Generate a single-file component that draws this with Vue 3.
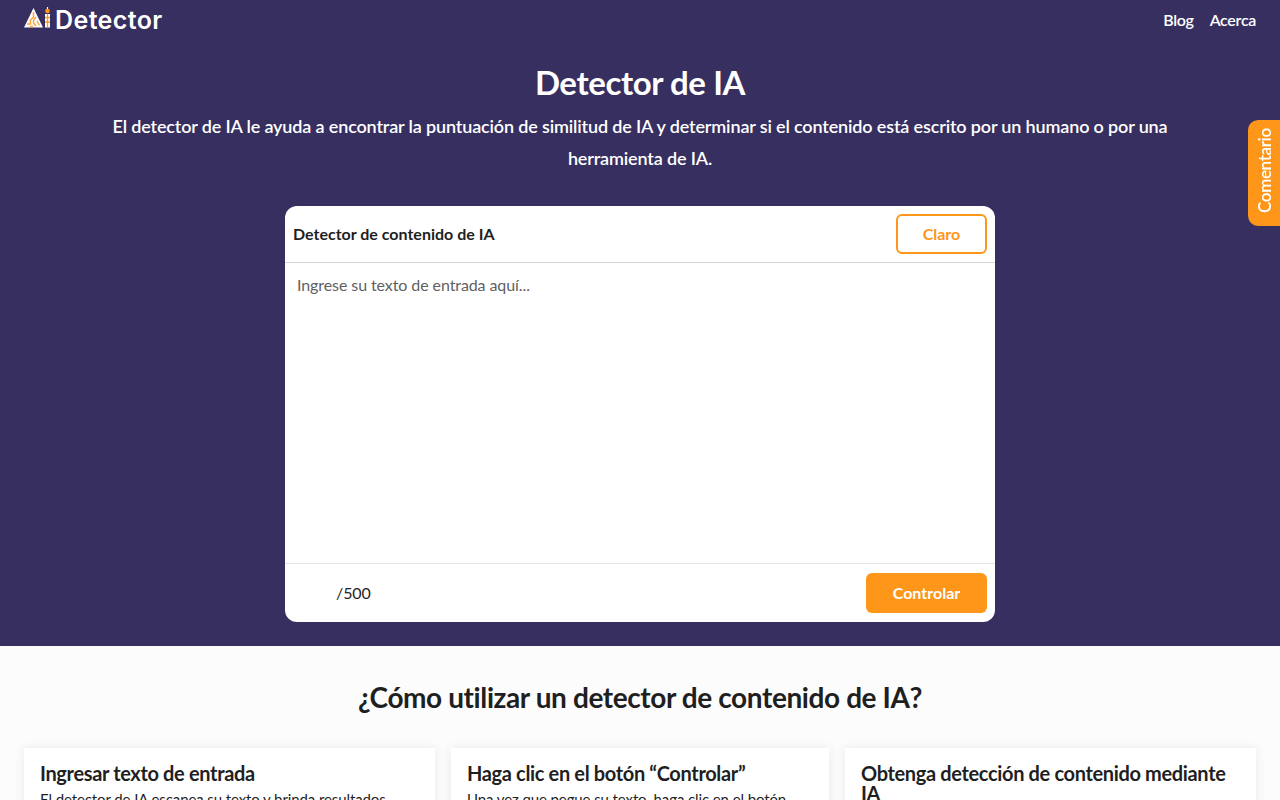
<template>
  <div class="page">
    <section class="hero">
      <header class="topbar">
        <a class="brand">
          <svg class="brand-icon" width="27" height="22" viewBox="0 0 27 22">
            <path d="M9.500 1 L19 20.500 L0 20.500 Z" fill="#fff" />
            <path d="M9.500 5 V10 L6.500 13 V17 H3 M12 10 L9.500 13 V16 L12 19 M13 14 L15.500 18.500 M6 19.500 H9" fill="none" stroke="#fda63f" stroke-width="1.500" />
            <rect x="21" y="7" width="5" height="13.500" fill="#fff" />
            <path d="M23.500 7 V20 M21 10.500 H26 M21 15 H26" fill="none" stroke="#fd9619" stroke-width="1.300" />
            <circle cx="23.500" cy="4" r="2.300" fill="#fd9619" />
            <path d="M23.500 0 V2" stroke="#fff" stroke-width="1.200" />
          </svg>
          <span class="brand-name">Detector</span>
        </a>
        <nav class="nav">
          <a>Blog</a>
          <a>Acerca</a>
        </nav>
      </header>

      <h1>Detector de IA</h1>
      <p class="lead">El detector de IA le ayuda a encontrar la puntuación de similitud de IA y determinar si el contenido está escrito por un humano o por una herramienta de IA.</p>

      <div class="tool">
        <div class="tool-head">
          <span class="tool-title">Detector de contenido de IA</span>
          <button class="btn-clear" @click="text = ''">Claro</button>
        </div>
        <textarea v-model="text" placeholder="Ingrese su texto de entrada aquí..."></textarea>
        <div class="tool-foot">
          <span class="count">{{ text.length || '' }}/500</span>
          <button class="btn-check">Controlar</button>
        </div>
      </div>
    </section>

    <section class="howto">
      <h2>¿Cómo utilizar un detector de contenido de IA?</h2>
      <div class="steps">
        <article v-for="step in steps" :key="step.title" class="step">
          <h3>{{ step.title }}</h3>
          <p>{{ step.body }}</p>
        </article>
      </div>
    </section>

    <button class="feedback">Comentario</button>
  </div>
</template>

<script setup>
import { ref } from "vue";

const text = ref("");

const steps = [
  {
    title: "Ingresar texto de entrada",
    body: "El detector de IA escanea su texto y brinda resultados precisos en cuestión de segundos.",
  },
  {
    title: "Haga clic en el botón “Controlar”",
    body: "Una vez que pegue su texto, haga clic en el botón para iniciar el análisis.",
  },
  {
    title: "Obtenga detección de contenido mediante IA",
    body: "Revise la puntuación de similitud de IA de su contenido.",
  },
];
</script>

<style>
html,
body {
  margin: 0;
  overflow: hidden;
}
</style>

<style scoped>
* {
  box-sizing: border-box;
}

.page {
  font-family: Lato, "Liberation Sans", sans-serif;
  color: #1f1f1f;
}

.hero {
  background: #372f60;
  color: #fff;
  height: 646px;
  padding: 0 24px;
  display: flex;
  flex-direction: column;
  align-items: center;
}

.topbar {
  width: 100%;
  height: 40px;
  display: flex;
  align-items: center;
  justify-content: space-between;
}

.brand {
  display: flex;
  align-items: center;
  gap: 4px;
}

.brand-icon {
  margin-bottom: 4px;
}

.brand-name {
  font-family: Inter, sans-serif;
  font-size: 25px;
  font-weight: 600;
  letter-spacing: 0.4px;
  margin-bottom: 1px;
}

.nav {
  display: flex;
  gap: 16px;
  font-size: 16px;
  font-weight: 600;
  letter-spacing: -0.3px;
  margin-bottom: 2px;
}

h1 {
  margin: 20px 0 0;
  font-size: 33px;
  line-height: 44px;
  font-weight: 700;
  letter-spacing: -0.4px;
}

.lead {
  margin: 6px 0 0;
  width: 1080px;
  font-size: 18px;
  line-height: 32px;
  font-weight: 600;
  letter-spacing: -0.15px;
  text-align: center;
}

.tool {
  margin-top: 32px;
  width: 710px;
  height: 416px;
  background: #fff;
  border-radius: 12px;
  color: #1f1f1f;
  display: flex;
  flex-direction: column;
}

.tool-head {
  height: 57px;
  padding: 0 8px;
  border-bottom: 1px solid #d9d5d9;
  display: flex;
  align-items: center;
  justify-content: space-between;
}

.tool-title {
  font-size: 16px;
  font-weight: 700;
  margin-bottom: 2px;
}

button {
  font-family: inherit;
  font-size: 16px;
  font-weight: 700;
  padding: 0 0 2px;
  cursor: pointer;
}

.btn-clear {
  width: 91px;
  height: 40px;
  background: #fff;
  color: #fd9619;
  border: 2px solid #fd9619;
  border-radius: 6px;
}

textarea {
  flex: 1;
  min-height: 0;
  width: 100%;
  border: none;
  outline: none;
  resize: none;
  padding: 11px 12px;
  font-family: inherit;
  font-size: 16px;
  line-height: 22px;
  letter-spacing: -0.09px;
  color: #1f1f1f;
}

textarea::placeholder {
  color: #5f5f5f;
  opacity: 1;
}

.tool-foot {
  height: 59px;
  padding: 0 8px 0 51px;
  border-top: 1px solid #e5e5e5;
  display: flex;
  align-items: center;
  justify-content: space-between;
  font-size: 16px;
}

.count {
  margin-bottom: 2px;
  letter-spacing: -0.1px;
}

.btn-check {
  width: 121px;
  height: 40px;
  background: #fd9619;
  color: #fff;
  border: none;
  border-radius: 6px;
}

.howto {
  background: #fcfcfc;
  padding: 32px 24px 40px;
}

h2 {
  margin: 0;
  font-size: 28px;
  line-height: 38px;
  font-weight: 700;
  letter-spacing: -0.4px;
  text-align: center;
}

.steps {
  margin-top: 32px;
  display: grid;
  grid-template-columns: 411fr 378fr 411fr;
  gap: 16px;
}

.step {
  background: #fff;
  padding: 15px 16px 16px;
  box-shadow: 0 0 10px rgba(0, 0, 0, 0.08);
}

h3 {
  margin: 0;
  font-size: 20px;
  line-height: 20px;
  font-weight: 700;
  letter-spacing: -0.35px;
}

.step p {
  margin: 4px 0 0;
  font-size: 15px;
  line-height: 24px;
  letter-spacing: -0.1px;
}

.feedback {
  position: fixed;
  top: 120px;
  right: 0;
  width: 32px;
  height: 106px;
  padding: 5px 2px 0 0;
  background: #fd9619;
  color: #fff;
  border: none;
  border-radius: 0 10px 10px 0;
  font-size: 17px;
  font-weight: 600;
  letter-spacing: -0.35px;
  writing-mode: vertical-rl;
  transform: rotate(180deg);
  display: flex;
  align-items: center;
  justify-content: center;
}
</style>
